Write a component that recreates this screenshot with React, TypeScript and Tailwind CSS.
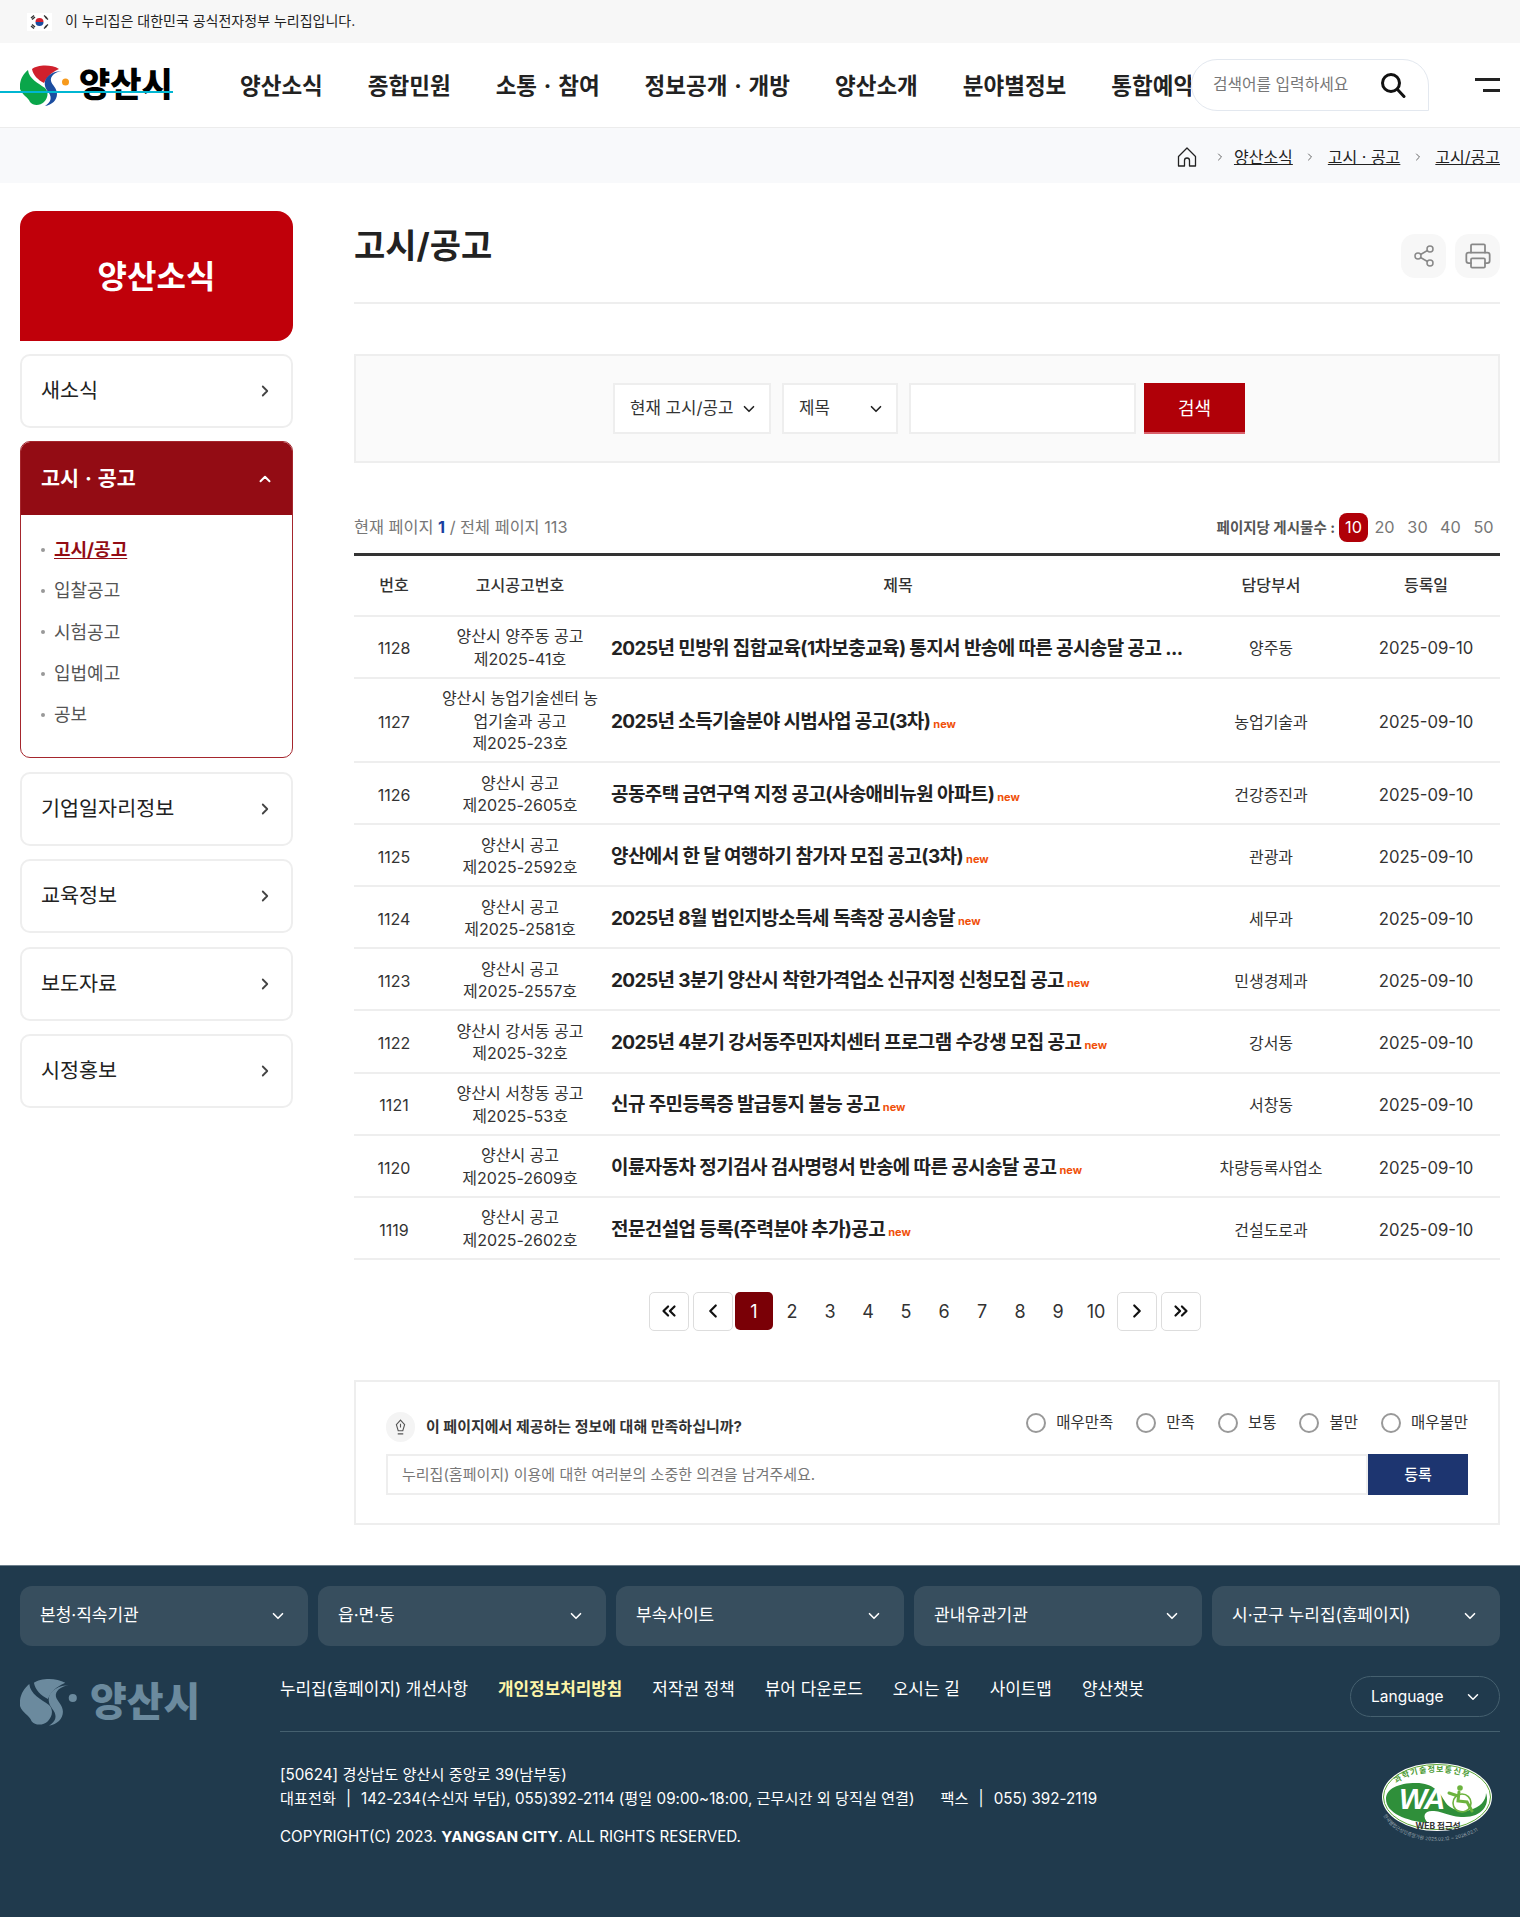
import { ChevronDown, ChevronLeft, ChevronRight, ChevronUp, ChevronsLeft, ChevronsRight, Printer, Share2 } from "lucide-react";

const navItems = ["양산소식", "종합민원", "소통 · 참여", "정보공개 · 개방", "양산소개", "분야별정보", "통합예약"];
const sideAfter = ["기업일자리정보", "교육정보", "보도자료", "시정홍보"];
const subItems = ["입찰공고", "시험공고", "입법예고", "공보"];

const rows = [
  { no: 1128, code: ["양산시 양주동 공고", "제2025-41호"], title: "2025년 민방위 집합교육(1차보충교육) 통지서 반송에 따른 공시송달 공고 ...", dept: "양주동", isNew: false },
  { no: 1127, code: ["양산시 농업기술센터 농", "업기술과 공고", "제2025-23호"], title: "2025년 소득기술분야 시범사업 공고(3차)", dept: "농업기술과", isNew: true },
  { no: 1126, code: ["양산시 공고", "제2025-2605호"], title: "공동주택 금연구역 지정 공고(사송애비뉴원 아파트)", dept: "건강증진과", isNew: true },
  { no: 1125, code: ["양산시 공고", "제2025-2592호"], title: "양산에서 한 달 여행하기 참가자 모집 공고(3차)", dept: "관광과", isNew: true },
  { no: 1124, code: ["양산시 공고", "제2025-2581호"], title: "2025년 8월 법인지방소득세 독촉장 공시송달", dept: "세무과", isNew: true },
  { no: 1123, code: ["양산시 공고", "제2025-2557호"], title: "2025년 3분기 양산시 착한가격업소 신규지정 신청모집 공고", dept: "민생경제과", isNew: true },
  { no: 1122, code: ["양산시 강서동 공고", "제2025-32호"], title: "2025년 4분기 강서동주민자치센터 프로그램 수강생 모집 공고", dept: "강서동", isNew: true },
  { no: 1121, code: ["양산시 서창동 공고", "제2025-53호"], title: "신규 주민등록증 발급통지 불능 공고", dept: "서창동", isNew: true },
  { no: 1120, code: ["양산시 공고", "제2025-2609호"], title: "이륜자동차 정기검사 검사명령서 반송에 따른 공시송달 공고", dept: "차량등록사업소", isNew: true },
  { no: 1119, code: ["양산시 공고", "제2025-2602호"], title: "전문건설업 등록(주력분야 추가)공고", dept: "건설도로과", isNew: true },
];

const footerSelects = ["본청·직속기관", "읍·면·동", "부속사이트", "관내유관기관", "시·군구 누리집(홈페이지)"];
const footerLinks = ["누리집(홈페이지) 개선사항", "개인정보처리방침", "저작권 정책", "뷰어 다운로드", "오시는 길", "사이트맵", "양산챗봇"];

function LogoMark({ mono, className }: { mono?: string; className: string }) {
  return (
    <svg viewBox="0 0 50 41" className={className}>
      <path d="M12 4C17 0 31-1 39 4C35 6 28 9 24 18C18 15 13 10 12 4Z" fill={mono ?? "#d0202c"} />
      <path d="M8 5C9 14 18 18 25 23C29 27 28 33 24 37C20 41 13 41 10 37C8 32 2 30 0 24C-1 16 3 9 8 5Z" fill={mono ?? "#0aa64a"} />
      <path d="M42 6C35 7 30 11 31 16C32 20 37 23 37 29C37 35 32 40 25 41C31 37 32 33 29 28C26 24 24 21 25 16C27 10 34 6 42 6Z" fill={mono ?? "#1b4da0"} />
      <circle cx="45.5" cy="17" r="3.5" fill={mono ?? "#f79a1c"} />
    </svg>
  );
}

function KoreaFlag() {
  return (
    <svg viewBox="0 0 25 18" className="w-[25px] h-[18px] shrink-0">
      <rect width="25" height="18" fill="#fff" />
      <path d="M8.5 9a4 4 0 0 1 8 0Z" fill="#d2202f" />
      <path d="M8.5 9a4 4 0 0 0 8 0Z" fill="#1b4da0" />
      <g stroke="#333" strokeWidth="1.4">
        <path d="M4 5 7 2.5M5 6.5 8 4M17 2.5 20 5M18 4 21 6.5M4 13 7 15.5M5 11.5 8 14M17 15.5 20 13M18 14 21 11.5" />
      </g>
    </svg>
  );
}

function WaMark() {
  return (
    <svg viewBox="0 0 118 82" className="w-[118px] h-[82px] shrink-0 overflow-visible">
      <defs>
        <path id="wa-top" d="M9 31A46 22 0 0 1 101 31" />
        <path id="wa-bottom" d="M0 50C18 88 98 88 118 44" />
      </defs>
      <ellipse cx="55" cy="34" rx="55" ry="34" fill="#fff" />
      <ellipse cx="55" cy="34" rx="53.500" ry="32.500" fill="none" stroke="#5fa838" strokeWidth="1" />
      <path d="M4 36C4 26 16 20 34 20C52 20 58 30 62 37C66 45 76 50 88 47C98 44 104 38 104 30C108 42 100 54 82 54C66 54 62 48 50 48C42 48 40 54 46 60C24 58 4 50 4 36Z" fill="#2f8f3a" />
      <text x="17" y="46" fill="#fff" fontSize="30" fontWeight="800" fontStyle="italic" fontFamily="Liberation Sans, sans-serif" letterSpacing="-2">WA</text>
      <circle cx="78" cy="25" r="2.800" fill="#6cb33f" />
      <path d="M77 29 76 38 85 39 90 48M76 33 67 30" fill="none" stroke="#6cb33f" strokeWidth="3" strokeLinecap="round" />
      <circle cx="80" cy="40" r="9" fill="none" stroke="#6cb33f" strokeWidth="1.600" />
      <text fontSize="8" fontWeight="700" fill="#4c9a34" letterSpacing="1">
        <textPath href="#wa-top" startOffset="11%">과학기술정보통신부</textPath>
      </text>
      <text x="56" y="66" textAnchor="middle" fontSize="8.500" fontWeight="700" fill="#333">WEB 접근성</text>
      <text fontSize="4.800" fill="#9aa5ad">
        <textPath href="#wa-bottom" startOffset="2%">한국웹접근성인증평가원 2025.02.12 ~ 2026.02.11</textPath>
      </text>
    </svg>
  );
}

function HomeIcon() {
  return (
    <svg viewBox="0 0 20 20" className="w-5 h-5" fill="none" stroke="#222" strokeWidth="1.3" strokeLinejoin="round">
      <path d="M10 1 1.500 9.500V19H7.500V13.500A2.500 2.500 0 0 1 12.500 13.500V19H18.500V9.500Z" />
    </svg>
  );
}

function SearchIcon() {
  return (
    <svg viewBox="0 0 26 26" className="w-[26px] h-[26px]" fill="none" stroke="#111" strokeWidth="3" strokeLinecap="round">
      <circle cx="11" cy="11" r="8.500" />
      <path d="M17.500 17.500 24 24.500" />
    </svg>
  );
}

function Header() {
  return (
    <>
      <div className="h-[43px] bg-[#f7f7f7] flex items-center pl-[27px] gap-[13px] text-[14px] text-[#222]">
        <KoreaFlag />
        <span className="-mt-[3px]">이 누리집은 대한민국 공식전자정부 누리집입니다.</span>
      </div>
      <header className="relative h-[85px] border-b border-[#ececec] flex items-center pl-5 pr-5">
        <div className="w-[220px] flex items-center gap-[9px] shrink-0">
          <LogoMark className="w-[50px] h-[41px] shrink-0" />
          <span className="text-[34px] leading-none font-black text-black">양산시</span>
        </div>
        <div className="absolute left-0 top-[48px] w-[173px] h-[2px] bg-[#00b6d2]" />
        <nav className="w-[951px] overflow-hidden flex gap-[45px] pt-[1px] whitespace-nowrap text-[22.500px] [word-spacing:1.500px] font-bold text-[#222]">
          {navItems.map((item) => (
            <a key={item} className="shrink-0">{item}</a>
          ))}
        </nav>
        <div className="w-[238px] h-[52px] flex items-center justify-between pl-[21px] pr-[22px] border border-[#e3e8ef] rounded-tl-[26px] rounded-bl-[26px] rounded-tr-[26px] shrink-0">
          <span className="text-[15.800px] text-[#777]">검색어를 입력하세요</span>
          <SearchIcon />
        </div>
        <div className="ml-auto w-[25px] flex flex-col items-end gap-[8px]">
          <span className="block w-[25px] h-[3px] bg-[#222]" />
          <span className="block w-[17px] h-[3px] bg-[#222]" />
        </div>
      </header>
      <div className="h-[55px] bg-[#f8f9fb] flex items-center justify-end pr-5 pt-[2px] text-[16px] text-[#222]">
        <HomeIcon />
        <ChevronRight className="w-3 h-3 text-[#666] ml-[17px] mr-[8px]" />
        <a className="underline">양산소식</a>
        <ChevronRight className="w-3 h-3 text-[#666] mx-[11.500px]" />
        <a className="underline">고시 · 공고</a>
        <ChevronRight className="w-3 h-3 text-[#666] mx-[11.500px]" />
        <a className="underline">고시/공고</a>
      </div>
    </>
  );
}

function SideItem({ label }: { label: string }) {
  return (
    <div className="h-[74px] rounded-[10px] border-2 border-[#eeeeee] flex items-center justify-between pl-[19px] pr-[17px] text-[20.700px] text-[#222]">
      <span>{label}</span>
      <ChevronRight className="w-[18px] h-[18px] text-[#444]" strokeWidth={2.4} />
    </div>
  );
}

function Sidebar() {
  return (
    <aside className="w-[273px] shrink-0 pt-[28px] flex flex-col gap-[13.500px]">
      <div className="h-[130px] -mb-[1px] pt-[2px] bg-[#c0000a] rounded-tl-[16px] rounded-tr-[16px] rounded-br-[16px] flex items-center justify-center text-white text-[32px] font-bold">
        양산소식
      </div>
      <SideItem label="새소식" />
      <div className="rounded-[10px] border border-[#a5262d] overflow-hidden h-[317px]">
        <div className="h-[73px] bg-[#930c14] flex items-center justify-between pl-5 pr-[18px] text-white text-[20.700px] [word-spacing:1px] font-bold">
          <span>고시 · 공고</span>
          <ChevronUp className="w-[18px] h-[18px]" strokeWidth={2.6} />
        </div>
        <ul className="pt-[14px] pl-5 flex flex-col text-[18px] text-[#555]">
          <li className="h-[41.300px] flex items-center gap-[9px]">
            <span className="w-1 h-1 rounded-full bg-[#999]" />
            <a className="font-bold text-[#930c14] underline underline-offset-2">고시/공고</a>
          </li>
          {subItems.map((item) => (
            <li key={item} className="h-[41.300px] flex items-center gap-[9px]">
              <span className="w-1 h-1 rounded-full bg-[#999]" />
              <a>{item}</a>
            </li>
          ))}
        </ul>
      </div>
      {sideAfter.map((item) => (
        <SideItem key={item} label={item} />
      ))}
    </aside>
  );
}

function SelectBox({ label, width }: { label: string; width: string }) {
  return (
    <div className={`h-[51px] ${width} bg-white border-2 border-[#eeeeee] flex items-center justify-between pl-[15px] pr-[11px] text-[16.800px] text-[#333]`}>
      <span className="pt-[1px]">{label}</span>
      <ChevronDown className="w-[18px] h-[18px] text-[#222]" strokeWidth={2.2} />
    </div>
  );
}

function SearchBox() {
  return (
    <div className="mt-[50px] h-[109px] bg-[#fafafa] border-2 border-[#eeeeee] flex items-center justify-center gap-[11px] pl-[4px]">
      <SelectBox label="현재 고시/공고" width="w-[158px]" />
      <SelectBox label="제목" width="w-[116px]" />
      <div className="h-[51px] w-[227px] bg-white border-2 border-[#eeeeee] -mr-[3px]" />
      <button className="h-[51px] w-[101px] pt-[2px] bg-[#b00008] border-b-2 border-[#d9606a] text-white text-[18px]">검색</button>
    </div>
  );
}

function ListMeta() {
  return (
    <div className="mt-[50px] h-[29px] flex items-center justify-between text-[16.300px] text-[#777]">
      <p>
        현재 페이지 <b className="text-[#1b3fa0] font-bold">1</b> / 전체 페이지 113
      </p>
      <div className="flex items-center">
        <span className="text-[14.500px] font-bold text-[#555] mr-[4px]">페이지당 게시물수 :</span>
        <span className="w-[29px] h-[29px] rounded-[8px] bg-[#b00008] text-white flex items-center justify-center">10</span>
        {[20, 30, 40, 50].map((n) => (
          <span key={n} className="w-[33px] text-center first:ml-[2px]">{n}</span>
        ))}
      </div>
    </div>
  );
}

function BoardTable() {
  return (
    <table className="mt-[11px] w-full table-fixed border-t-[3px] border-[#333] text-[16px] leading-[22.400px] text-[#333]">
      <colgroup>
        <col className="w-[80px]" />
        <col className="w-[172px]" />
        <col className="w-[584px]" />
        <col className="w-[162px]" />
        <col className="w-[148px]" />
      </colgroup>
      <thead>
        <tr className="h-[61px] border-b-2 border-[#eeeeee] font-medium text-[16px] text-[#333]">
          <th className="font-medium">번호</th>
          <th className="font-medium">고시공고번호</th>
          <th className="font-medium">제목</th>
          <th className="font-medium">담당부서</th>
          <th className="font-medium">등록일</th>
        </tr>
      </thead>
      <tbody>
        {rows.map((r) => (
          <tr key={r.no} className="border-b-2 border-[#eeeeee] text-center">
            <td className="pt-[4px]">{r.no}</td>
            <td className="pt-[8.600px] pb-[6.700px] px-1">
              {r.code.map((line) => (
                <div key={line}>{line}</div>
              ))}
            </td>
            <td className="text-left pl-[5px] pt-[6px] whitespace-nowrap overflow-hidden">
              <a className="text-[19px] tracking-[-0.6px] font-bold text-[#222]">{r.title}</a>
              {r.isNew && <span className="ml-[3px] text-[11px] font-bold text-[#f0500a]">new</span>}
            </td>
            <td className="pt-[4px]">{r.dept}</td>
            <td className="pt-[4px] text-[16.700px]">2025-09-10</td>
          </tr>
        ))}
      </tbody>
    </table>
  );
}

function PageBtn({ children }: { children: React.ReactNode }) {
  return (
    <button className="w-[40px] h-[39px] rounded-[5px] border border-[#dddddd] flex items-center justify-center text-[#111]">
      {children}
    </button>
  );
}

function Pagination() {
  return (
    <div className="mt-[32px] flex items-center justify-center pr-[4px]">
      <div className="flex items-center gap-[4px] mr-[2px]">
        <PageBtn><ChevronsLeft className="w-[22px] h-[22px]" strokeWidth={2.4} /></PageBtn>
        <PageBtn><ChevronLeft className="w-[22px] h-[22px]" strokeWidth={2.4} /></PageBtn>
      </div>
      <div className="w-[38px] h-[38px] rounded-[5px] bg-[#7a0006] text-white text-[18px] flex items-center justify-center">1</div>
      {[2, 3, 4, 5, 6, 7, 8, 9, 10].map((n) => (
        <span key={n} className="w-[38px] text-center text-[18px] text-[#333]">{n}</span>
      ))}
      <div className="flex items-center gap-[4px] ml-[2px]">
        <PageBtn><ChevronRight className="w-[22px] h-[22px]" strokeWidth={2.4} /></PageBtn>
        <PageBtn><ChevronsRight className="w-[22px] h-[22px]" strokeWidth={2.4} /></PageBtn>
      </div>
    </div>
  );
}

function Satisfaction() {
  const opts = ["매우만족", "만족", "보통", "불만", "매우불만"];
  return (
    <div className="mt-[49.500px] h-[145px] border-2 border-[#eeeeee] pl-[30px] pr-[30px] pt-[28px]">
      <div className="flex items-start justify-between h-[44px]">
        <div className="flex items-center gap-[11px] pt-[2px]">
          <span className="w-[29px] h-[30px] rounded-full bg-[#f4f4f4] flex items-center justify-center">
            <svg viewBox="0 0 12 18" className="w-[11px] h-[17px]" fill="none" stroke="#555" strokeWidth="1.200">
              <path d="M6 1 10.500 6 8.500 12.500H3.500L1.500 6ZM6 5V9M3 16H9" />
            </svg>
          </span>
          <span className="text-[15px] font-bold text-[#333]">이 페이지에서 제공하는 정보에 대해 만족하십니까?</span>
        </div>
        <div className="flex items-center gap-[23px] text-[15.500px] text-[#333] pt-[1px]">
          {opts.map((o) => (
            <label key={o} className="flex items-center gap-[10px]">
              <span className="w-5 h-5 rounded-full border-2 border-[#999] bg-white" />
              {o}
            </label>
          ))}
        </div>
      </div>
      <div className="h-[41px] flex">
        <div className="flex-1 border-2 border-[#eeeeee] flex items-center pl-[14px] text-[15px] text-[#777]">
          누리집(홈페이지) 이용에 대한 여러분의 소중한 의견을 남겨주세요.
        </div>
        <button className="w-[100px] bg-[#1d3570] text-white text-[15px] font-medium">등록</button>
      </div>
    </div>
  );
}

function Footer() {
  return (
    <footer className="h-[352px] bg-[#203a4d] border-t border-[#6d7f8c] px-5 pt-[20px] text-white">
      <div className="grid grid-cols-5 gap-[10px]">
        {footerSelects.map((s) => (
          <div key={s} className="h-[60px] rounded-[12px] bg-[#374e5e] flex items-center justify-between pl-5 pr-[21px] text-[17px]">
            <span>{s}</span>
            <ChevronDown className="w-[18px] h-[18px]" strokeWidth={2.2} />
          </div>
        ))}
      </div>
      <div className="mt-[30px] flex">
        <div className="w-[260px] shrink-0 flex items-center h-[52px] gap-[12px]">
          <LogoMark mono="#6b8a9e" className="w-[58px] h-[50px] shrink-0" />
          <span className="text-[40px] leading-none font-black text-[#6b8a9e]">양산시</span>
        </div>
        <div className="flex-1">
          <div className="h-[56px] border-b border-[#45606f] flex justify-between">
            <div className="flex gap-[30px] text-[16.900px] pt-[1px]">
              {footerLinks.map((l, i) => (
                <a key={l} className={i === 1 ? "font-bold text-[#fdf5a8]" : ""}>{l}</a>
              ))}
            </div>
            <div className="w-[150px] h-[41px] rounded-full border border-[#45606f] flex items-center justify-between pl-[20px] pr-[17px] text-[15.500px]">
              <span>Language</span>
              <ChevronDown className="w-[18px] h-[18px]" strokeWidth={2} />
            </div>
          </div>
          <div className="flex justify-between pt-[31px]">
            <div className="text-[15.200px] leading-[24px]">
              <p>[50624] 경상남도 양산시 중앙로 39(남부동)</p>
              <p>
                대표전화<span className="mx-[10px]">|</span>142-234(수신자 부담), 055)392-2114 (평일 09:00~18:00, 근무시간 외 당직실 연결)
                <span className="ml-[26px]">팩스</span><span className="mx-[10px]">|</span>055) 392-2119
              </p>
              <p className="mt-[14px]">COPYRIGHT(C) 2023. <b>YANGSAN CITY</b>. ALL RIGHTS RESERVED.</p>
            </div>
            <WaMark />
          </div>
        </div>
      </div>
    </footer>
  );
}

export default function App() {
  return (
    <div className="font-['Inter','Noto_Sans_CJK_KR',sans-serif] bg-white w-[1520px]">
      <Header />
      <div className="flex justify-between px-5 h-[1382px]">
        <Sidebar />
        <main className="w-[1146px]">
          <div className="h-[121px] border-b-2 border-[#eeeeee] flex items-start justify-between pt-[41px]">
            <h1 className="text-[34px] leading-[44px] font-bold text-[#222]">고시/공고</h1>
            <div className="flex gap-[9px] pt-[10px]">
              <span className="w-[45px] h-[44px] rounded-[14px] bg-[#f7f7f7] flex items-center justify-center text-[#888]"><Share2 className="w-6 h-6" strokeWidth={1.500} /></span>
              <span className="w-[45px] h-[44px] rounded-[14px] bg-[#f7f7f7] flex items-center justify-center text-[#888]"><Printer className="w-7 h-7" strokeWidth={1.500} /></span>
            </div>
          </div>
          <SearchBox />
          <ListMeta />
          <BoardTable />
          <Pagination />
          <Satisfaction />
        </main>
      </div>
      <Footer />
    </div>
  );
}
